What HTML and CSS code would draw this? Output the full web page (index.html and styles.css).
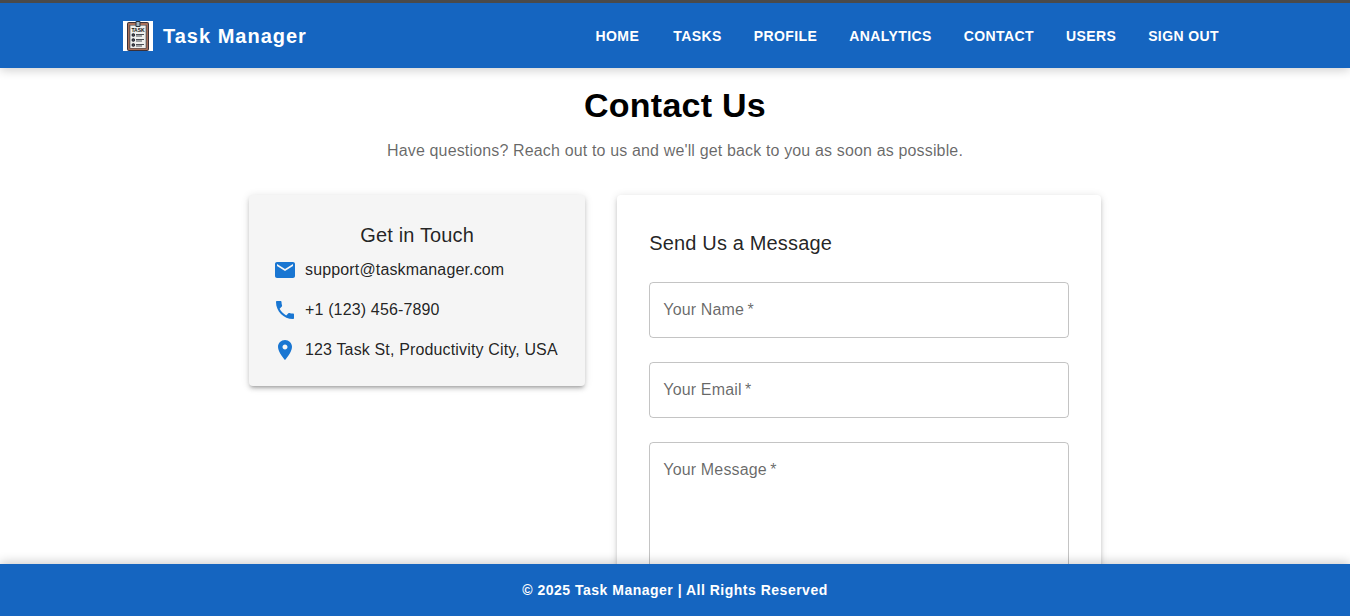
FILE: index.html
```html
<!DOCTYPE html>
<html lang="en">
<head>
<meta charset="utf-8">
<meta name="viewport" content="width=device-width, initial-scale=1">
<title>Task Manager - Contact Us</title>
<link rel="stylesheet" href="styles.css">
</head>
<body>
<header class="topbar">
  <div class="topbar-inner">
    <a class="brand" href="#home">
      <svg class="brand-logo" viewBox="0 0 30 30" aria-hidden="true">
        <rect width="30" height="30" fill="#fff"/>
        <rect x="4" y="1" width="22" height="29" rx="2" fill="#3a3038"/>
        <rect x="5" y="2" width="20" height="27" rx="1" fill="#a9705a"/>
        <rect x="6.500" y="4" width="17" height="23.500" fill="#3d4248"/>
        <rect x="7.300" y="4.500" width="15.400" height="22.500" fill="#eef0ee"/>
        <rect x="12.500" y="0" width="5" height="6" rx="1" fill="#25303a"/>
        <rect x="13.500" y="1" width="3" height="4" fill="#9fb4c4"/>
        <text class="logo-text" x="15" y="11" text-anchor="middle">TASK</text>
        <g fill="#777b85" stroke="#22252d" stroke-width="1.200">
          <circle cx="10.300" cy="14" r="1.200"/>
          <circle cx="10.300" cy="19" r="1.200"/>
          <circle cx="10.300" cy="24" r="1.200"/>
        </g>
        <path d="M13 13.500h8M13 15h6M13 18.500h8M13 20h6M13 23.500h8M13 25h6" stroke="#4b4f55" stroke-width="1"/>
      </svg>
      <span>Task Manager</span>
    </a>
    <nav class="nav">
      <a class="nav-link" href="#home">Home</a>
      <a class="nav-link" href="#tasks">Tasks</a>
      <a class="nav-link" href="#profile">Profile</a>
      <a class="nav-link" href="#analytics">Analytics</a>
      <a class="nav-link" href="#contact">Contact</a>
      <a class="nav-link" href="#users">Users</a>
      <button class="nav-link" type="button">Sign Out</button>
    </nav>
  </div>
</header>

<main class="page">
  <div class="container">
    <h1 class="page-title">Contact Us</h1>
    <p class="page-lead">Have questions? Reach out to us and we'll get back to you as soon as possible.</p>
    <div class="columns">
      <section class="card info-card">
        <h2 class="card-title info-title">Get in Touch</h2>
        <ul class="info-list">
          <li class="info-item">
            <svg class="icon" viewBox="0 0 24 24" aria-hidden="true"><path d="M20 4H4c-1.100 0-1.990.9-1.990 2L2 18c0 1.100.9 2 2 2h16c1.100 0 2-.9 2-2V6c0-1.100-.9-2-2-2m0 4-8 5-8-5V6l8 5 8-5z"/></svg>
            <span>support@taskmanager.com</span>
          </li>
          <li class="info-item">
            <svg class="icon" viewBox="0 0 24 24" aria-hidden="true"><path d="M6.620 10.790c1.440 2.830 3.760 5.140 6.590 6.590l2.200-2.200c.27-.27.67-.36 1.020-.24 1.120.37 2.330.57 3.570.57.55 0 1 .45 1 1V20c0 .55-.45 1-1 1-9.390 0-17-7.610-17-17 0-.55.45-1 1-1h3.500c.55 0 1 .45 1 1 0 1.250.2 2.450.57 3.570.11.35.03.74-.25 1.020z"/></svg>
            <span>+1 (123) 456-7890</span>
          </li>
          <li class="info-item">
            <svg class="icon" viewBox="0 0 24 24" aria-hidden="true"><path d="M12 2C8.130 2 5 5.130 5 9c0 5.250 7 13 7 13s7-7.750 7-13c0-3.870-3.130-7-7-7m0 9.500c-1.380 0-2.500-1.120-2.500-2.500s1.120-2.500 2.500-2.500 2.500 1.120 2.500 2.500-1.120 2.500-2.500 2.500"/></svg>
            <span>123 Task St, Productivity City, USA</span>
          </li>
        </ul>
      </section>

      <section class="card form-card">
        <h2 class="card-title form-title">Send Us a Message</h2>
        <form class="form">
          <div class="field">
            <input class="control" id="name" type="text" placeholder=" " required>
            <label class="field-label" for="name">Your Name&thinsp;*</label>
          </div>
          <div class="field">
            <input class="control" id="email" type="email" placeholder=" " required>
            <label class="field-label" for="email">Your Email&thinsp;*</label>
          </div>
          <div class="field">
            <textarea class="control" id="message" rows="6" placeholder=" " required></textarea>
            <label class="field-label" for="message">Your Message&thinsp;*</label>
          </div>
        </form>
      </section>
    </div>
  </div>
</main>

<footer class="footer">© 2025 Task Manager | All Rights Reserved</footer>
</body>
</html>
```
FILE: styles.css
```css
* {
  box-sizing: border-box;
}

body {
  margin: 0;
  height: 100vh;
  display: flex;
  flex-direction: column;
  background: #fff;
  color: rgba(0, 0, 0, 0.87);
  font: 400 16px/24px "Liberation Sans", Arial, sans-serif;
  letter-spacing: 0.00938em;
}

.topbar {
  position: relative;
  z-index: 2;
  flex: none;
  border-top: 3px solid #4a4a4a;
  background: #1565c0;
  color: #fff;
  box-shadow: 0 2px 10px rgba(0, 0, 0, 0.2);
}

.topbar-inner {
  max-width: 1200px;
  min-height: 65px;
  margin: 0 auto;
  padding: 1px 48px 0;
  display: flex;
  align-items: center;
  justify-content: space-between;
}

.brand {
  display: flex;
  align-items: center;
  gap: 10px;
  color: inherit;
  font-size: 20px;
  line-height: 32px;
  font-weight: 700;
  letter-spacing: 1px;
  text-decoration: none;
}

.brand-logo {
  width: 30px;
  height: 30px;
}

.logo-text {
  font-size: 5px;
  font-weight: 700;
  letter-spacing: 0;
  fill: #111;
}

.nav {
  display: flex;
  gap: 16px;
}

.nav-link {
  min-width: 64px;
  padding: 6px 8px;
  border: 0;
  background: none;
  color: inherit;
  font: 700 14px/24px "Liberation Sans", Arial, sans-serif;
  letter-spacing: 0.02857em;
  text-align: center;
  text-decoration: none;
  text-transform: uppercase;
  cursor: pointer;
}

.page {
  flex: 1;
  min-height: 0;
  overflow-y: auto;
  scrollbar-width: none;
}

.container {
  max-width: 900px;
  margin: 0 auto;
  padding: 16px 24px 40px;
}

.page-title {
  margin: 0 0 13px;
  color: #000;
  font-size: 34px;
  line-height: 42px;
  font-weight: 700;
  letter-spacing: 0.00735em;
  text-align: center;
}

.page-lead {
  margin: 0 0 32px;
  color: rgba(0, 0, 0, 0.6);
  text-align: center;
}

.columns {
  display: grid;
  grid-template-columns: repeat(12, 1fr);
  gap: 32px;
  align-items: start;
}

.card {
  border-radius: 4px;
  background: #fff;
  box-shadow: 0 3px 3px -2px rgba(0, 0, 0, 0.2), 0 3px 4px rgba(0, 0, 0, 0.14), 0 1px 8px rgba(0, 0, 0, 0.12);
}

.info-card {
  grid-column: span 5;
  padding: 24px;
  background: #f5f5f5;
}

.form-card {
  grid-column: span 7;
  padding: 32px;
}

.card-title {
  margin: 0;
  font-size: 20px;
  line-height: 32px;
  font-weight: 400;
  letter-spacing: 0.0075em;
}

.info-title {
  margin-bottom: 7px;
  text-align: center;
}

.form-title {
  margin-bottom: 23px;
}

.info-list {
  margin: 0;
  padding: 0;
  display: grid;
  gap: 16px;
  list-style: none;
}

.info-item {
  display: flex;
  align-items: center;
  gap: 8px;
}

.icon {
  flex: none;
  width: 24px;
  height: 24px;
  fill: #1976d2;
}

.form {
  display: grid;
  gap: 24px;
}

.field {
  position: relative;
}

.control {
  display: block;
  width: 100%;
  min-height: 56px;
  padding: 15px 13px;
  border: 1px solid rgba(0, 0, 0, 0.23);
  border-radius: 4px;
  background: transparent;
  color: inherit;
  font: inherit;
  resize: none;
}

.field-label {
  position: absolute;
  top: 16px;
  left: 14px;
  color: rgba(0, 0, 0, 0.6);
  pointer-events: none;
}

.control:focus + .field-label,
.control:not(:placeholder-shown) + .field-label {
  top: -12px;
  padding: 0 4px;
  background: #fff;
  font-size: 12px;
}

.footer {
  position: relative;
  z-index: 2;
  flex: none;
  padding: 16px;
  background: #1565c0;
  color: #fff;
  box-shadow: 0 -2px 10px rgba(0, 0, 0, 0.2);
  font-size: 14px;
  line-height: 20px;
  font-weight: 700;
  letter-spacing: 0.5px;
  text-align: center;
}
```
